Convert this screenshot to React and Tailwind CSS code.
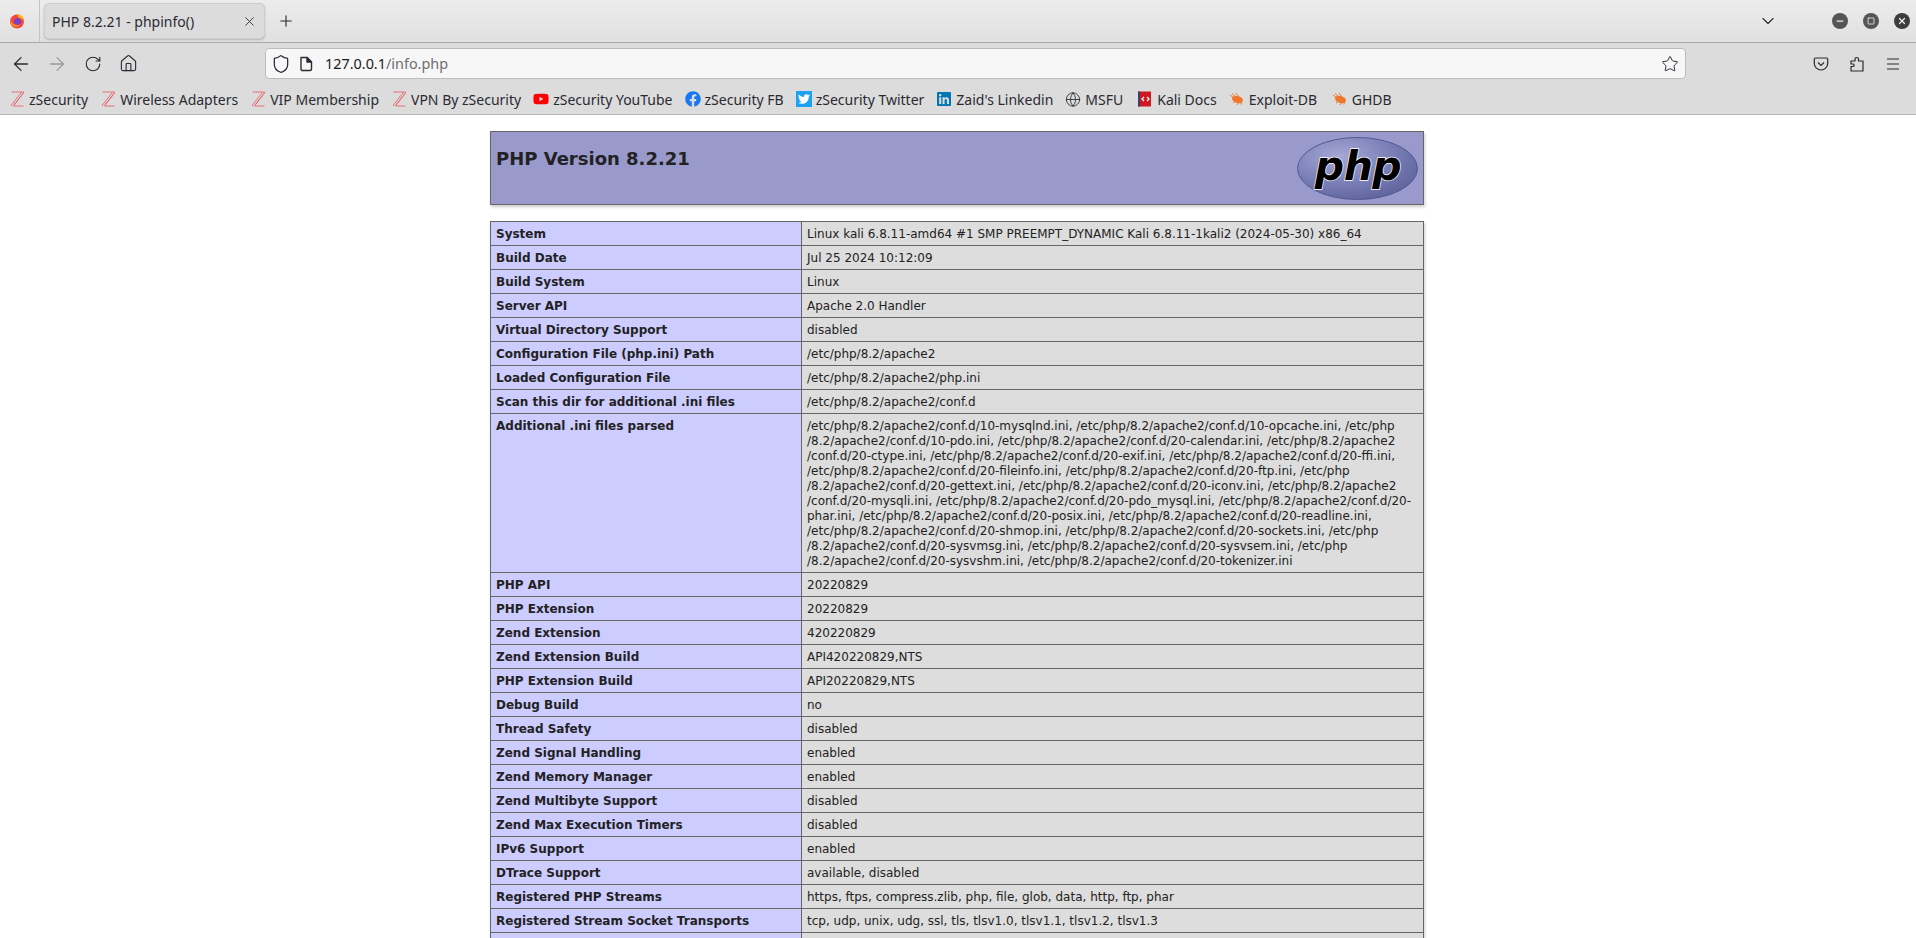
import React from 'react';
import { FaFacebook, FaTwitter, FaLinkedin, FaYoutube } from 'react-icons/fa';
import { ArrowLeft, ArrowRight, RotateCw, Home, Shield, Star, ChevronDown, Plus, X, Globe, Minus, Square } from 'lucide-react';

const ZIcon = () => (
  <svg width="13" height="16" viewBox="0 0 13 16" fill="none" stroke="#e8636b" strokeWidth="0.9">
    <path d="M0.5 1H12.5V2L2.5 15H12.5M0.5 15V14L10.5 1.2M3 13.8L12 2.5" />
  </svg>
);

const FirefoxIcon = () => (
  <svg width="16" height="16" viewBox="0 0 16 16">
    <circle cx="8" cy="8.5" r="7" fill="#f4473f" />
    <circle cx="8.5" cy="8.5" r="3.6" fill="#7b3fbf" />
    <path d="M8 1C12 1 15.5 4 15 9C14.5 6 12 5 10 5Z" fill="#ffb21e" />
    <path d="M1.5 7C3 11 7 13 11 11.5C9 14.5 3.5 15 1.5 10Z" fill="#ff8a1f" />
  </svg>
);

const PocketIcon = () => (
  <svg width="16" height="16" viewBox="0 0 16 16" fill="none" stroke="#2b2a33" strokeWidth="1.2">
    <path d="M2.5 2H13.5C14.2 2 14.7 2.5 14.7 3.2V7.5C14.7 11 11.5 14 8 14C4.5 14 1.3 11 1.3 7.5V3.2C1.3 2.5 1.8 2 2.5 2Z" />
    <path d="M5 6.5L8 9.5L11 6.5" />
  </svg>
);

const PuzzleIcon = () => (
  <svg width="16" height="16" viewBox="0 0 16 16" fill="none" stroke="#2b2a33" strokeWidth="1.2" strokeLinejoin="round">
    <path d="M2 15V10.5H4.2C5.4 10.5 5.4 8 4.2 8H2V5H6V3C6 1 9.5 1 9.5 3V5H14V15Z" />
  </svg>
);

const FileIcon = () => (
  <svg width="14" height="16" viewBox="0 0 14 16" fill="none" stroke="#2b2a33" strokeWidth="1.4" strokeLinejoin="round">
    <path d="M2 1.5H8L12.5 6V13C12.5 13.9 11.9 14.5 11 14.5H3C2.4 14.5 2 13.9 2 13Z" />
    <path d="M8 1.5V6H12.5Z" fill="#2b2a33" />
  </svg>
);

const MenuIcon = () => (
  <svg width="16" height="16" viewBox="0 0 16 16" stroke="#2b2a33" strokeWidth="1.2">
    <path d="M2 3H14M2 8H14M2 13H14" />
  </svg>
);

const KaliDocsIcon = () => (
  <svg width="14" height="16" viewBox="0 0 14 16">
    <rect x="0" y="0.5" width="13" height="15" fill="#d01820" />
    <rect x="0" y="0.5" width="2" height="15" fill="#3a3f78" />
    <path d="M6 6L4 8L6 10M9 6L11 8L9 10" fill="none" stroke="#fff" strokeWidth="1.2" />
  </svg>
);

const BugIcon = () => (
  <svg width="16" height="14" viewBox="0 0 16 14" fill="none" stroke="#f0762d" strokeWidth="1">
    <ellipse cx="8.5" cy="7.5" rx="5" ry="2.8" fill="#f0762d" transform="rotate(18 8.5 7.5)" />
    <path d="M1 3L5 6M3 1.5L7 5M7 1L10 5M4 11L7 9M8 13L10 10M12 12.5L12.5 9.5" />
  </svg>
);

const PhpLogo = () => (
  <svg width="123" height="65" viewBox="0 0 123 65">
    <defs>
      <radialGradient id="phpFill" cx="0.35" cy="0.3" r="0.8">
        <stop offset="0" stopColor="#a5a8d4" />
        <stop offset="0.6" stopColor="#777bb4" />
        <stop offset="1" stopColor="#5c6099" />
      </radialGradient>
    </defs>
    <ellipse cx="61.5" cy="32.5" rx="60" ry="31" fill="url(#phpFill)" stroke="#4f5b93" strokeWidth="1" />
    <text x="62" y="44" textAnchor="middle" fontFamily="'DejaVu Sans', sans-serif" fontSize="41" fontWeight="700" fontStyle="italic" fill="#000" stroke="#fff" strokeWidth="1.4" paintOrder="stroke" letterSpacing="-0.5">php</text>
  </svg>
);

const bookmarks = [
  { label: 'zSecurity', icon: <ZIcon /> },
  { label: 'Wireless Adapters', icon: <ZIcon /> },
  { label: 'VIP Membership', icon: <ZIcon /> },
  { label: 'VPN By zSecurity', icon: <ZIcon /> },
  { label: 'zSecurity YouTube', icon: <FaYoutube size={16} color="#f00" /> },
  { label: 'zSecurity FB', icon: <FaFacebook size={16} color="#1877f2" /> },
  { label: 'zSecurity Twitter', icon: <FaTwitter size={16} className="bg-[#1da1f2] text-white p-[2px]" /> },
  { label: "Zaid's Linkedin", icon: <FaLinkedin size={16} color="#0077b5" /> },
  { label: 'MSFU', icon: <Globe size={17} strokeWidth={1.3} color="#2b2a33" /> },
  { label: 'Kali Docs', icon: <KaliDocsIcon />, cls: 'ml-[2px]' },
  { label: 'Exploit-DB', icon: <BugIcon />, labelCls: 'min-w-[71px]' },
  { label: 'GHDB', icon: <BugIcon /> },
];

// hard line breaks: the reference wraps these before slashes
const iniLines = [
  '/etc/php/8.2/apache2/conf.d/10-mysqlnd.ini, /etc/php/8.2/apache2/conf.d/10-opcache.ini, /etc/php',
  '/8.2/apache2/conf.d/10-pdo.ini, /etc/php/8.2/apache2/conf.d/20-calendar.ini, /etc/php/8.2/apache2',
  '/conf.d/20-ctype.ini, /etc/php/8.2/apache2/conf.d/20-exif.ini, /etc/php/8.2/apache2/conf.d/20-ffi.ini,',
  '/etc/php/8.2/apache2/conf.d/20-fileinfo.ini, /etc/php/8.2/apache2/conf.d/20-ftp.ini, /etc/php',
  '/8.2/apache2/conf.d/20-gettext.ini, /etc/php/8.2/apache2/conf.d/20-iconv.ini, /etc/php/8.2/apache2',
  '/conf.d/20-mysqli.ini, /etc/php/8.2/apache2/conf.d/20-pdo_mysql.ini, /etc/php/8.2/apache2/conf.d/20-',
  'phar.ini, /etc/php/8.2/apache2/conf.d/20-posix.ini, /etc/php/8.2/apache2/conf.d/20-readline.ini,',
  '/etc/php/8.2/apache2/conf.d/20-shmop.ini, /etc/php/8.2/apache2/conf.d/20-sockets.ini, /etc/php',
  '/8.2/apache2/conf.d/20-sysvmsg.ini, /etc/php/8.2/apache2/conf.d/20-sysvsem.ini, /etc/php',
  '/8.2/apache2/conf.d/20-sysvshm.ini, /etc/php/8.2/apache2/conf.d/20-tokenizer.ini',
];

const rows = [
  ['System', 'Linux kali 6.8.11-amd64 #1 SMP PREEMPT_DYNAMIC Kali 6.8.11-1kali2 (2024-05-30) x86_64'],
  ['Build Date', 'Jul 25 2024 10:12:09'],
  ['Build System', 'Linux'],
  ['Server API', 'Apache 2.0 Handler'],
  ['Virtual Directory Support', 'disabled'],
  ['Configuration File (php.ini) Path', '/etc/php/8.2/apache2'],
  ['Loaded Configuration File', '/etc/php/8.2/apache2/php.ini'],
  ['Scan this dir for additional .ini files', '/etc/php/8.2/apache2/conf.d'],
  ['Additional .ini files parsed', iniLines],
  ['PHP API', '20220829'],
  ['PHP Extension', '20220829'],
  ['Zend Extension', '420220829'],
  ['Zend Extension Build', 'API420220829,NTS'],
  ['PHP Extension Build', 'API20220829,NTS'],
  ['Debug Build', 'no'],
  ['Thread Safety', 'disabled'],
  ['Zend Signal Handling', 'enabled'],
  ['Zend Memory Manager', 'enabled'],
  ['Zend Multibyte Support', 'disabled'],
  ['Zend Max Execution Timers', 'disabled'],
  ['IPv6 Support', 'enabled'],
  ['DTrace Support', 'available, disabled'],
  ['Registered PHP Streams', 'https, ftps, compress.zlib, php, file, glob, data, http, ftp, phar'],
  ['Registered Stream Socket Transports', 'tcp, udp, unix, udg, ssl, tls, tlsv1.0, tlsv1.1, tlsv1.2, tlsv1.3'],
];

const App = () => {
  return (
    <div className="h-[938px] overflow-hidden bg-white flex flex-col font-['Noto_Sans',sans-serif]">
      {/* tab strip */}
      <div className="h-[43px] shrink-0 flex items-center bg-gradient-to-b from-[#ececec] to-[#e0e0e0] border-b border-[#a8a8a8]">
        <div className="w-10 h-full flex items-center pl-[9px] border-r border-[#c4c4c4] shrink-0">
          <FirefoxIcon />
        </div>
        <div className="ml-1 w-[221px] h-9 bg-[#dcdcdc] rounded-[5px] border border-[#cdcdcd] shadow-[0_1px_2px_rgba(0,0,0,0.2)] flex items-center pl-[7px] pr-[7px] justify-between">
          <span className="text-[14px] text-[#2b2a33]">PHP 8.2.21 - phpinfo()</span>
          <X size={15} strokeWidth={1.4} color="#2b2a33" />
        </div>
        <Plus size={18} strokeWidth={1.5} color="#2b2a33" className="ml-[12px]" />
        <div className="flex-1" />
        <ChevronDown size={20} strokeWidth={1.3} color="#2b2a33" className="mr-[54px]" />
        <div className="flex items-center gap-[15px] mr-[6px]">
          <span className="w-4 h-4 rounded-full bg-[#555] flex items-center justify-center"><Minus size={10} strokeWidth={3} color="#eee" /></span>
          <span className="w-4 h-4 rounded-full bg-[#555] flex items-center justify-center"><Square size={8} strokeWidth={2.5} color="#eee" /></span>
          <span className="w-4 h-4 rounded-full bg-[#3d3d3d] flex items-center justify-center"><X size={10} strokeWidth={3} color="#eee" /></span>
        </div>
      </div>

      {/* nav bar */}
      <div className="h-[41px] shrink-0 bg-[#dcdcdc] flex items-center">
        <ArrowLeft size={22} strokeWidth={1.4} color="#2b2a33" className="ml-[10px]" />
        <ArrowRight size={22} strokeWidth={1.4} color="#9a9a9f" className="ml-[14px]" />
        <RotateCw size={18} strokeWidth={1.5} color="#2b2a33" className="ml-4" />
        <Home size={19} strokeWidth={1.4} color="#2b2a33" className="ml-[17px]" />
        <div className="ml-[127px] w-[1421px] h-[31px] shrink-0 bg-[#f7f7f7] rounded-[4px] border border-[#bcbcbc] flex items-center">
          <Shield size={20} strokeWidth={1.5} color="#2b2a33" className="ml-[5px]" />
          <span className="ml-2 flex"><FileIcon /></span>
          <span className="ml-3 text-[14.4px] text-[#1c1b22]">127.0.0.1<span className="text-[#6d6d72]">/info.php</span></span>
          <Star size={18} strokeWidth={1.3} color="#2b2a33" className="ml-auto mr-[6px]" />
        </div>
        <div className="ml-[127px] flex items-center gap-5">
          <PocketIcon />
          <PuzzleIcon />
          <MenuIcon />
        </div>
      </div>

      {/* bookmarks */}
      <div className="h-[31px] shrink-0 bg-[#dcdcdc] border-b border-[#b5b5b5] flex items-center pl-[9px] gap-3">
        {bookmarks.map((b) => (
          <div key={b.label} className={`flex items-center gap-1 ${b.cls || ''}`}>
            <span className="w-4 h-4 flex items-center justify-center shrink-0">{b.icon}</span>
            <span className={`text-[14px] text-[#2b2a33] whitespace-nowrap ${b.labelCls || ''}`}>{b.label}</span>
          </div>
        ))}
      </div>

      {/* page */}
      <div className="flex-1 min-h-0 overflow-hidden bg-white text-[#222] font-['DejaVu_Sans',sans-serif] text-[12px] leading-[15px]">
        <div className="w-[934px] ml-[490px] mt-4">
          <div className="h-[74px] bg-[#9999cc] border border-[#666] shadow-[1px_2px_3px_#ccc] flex justify-between pl-[5px] pr-[4px] pt-[4px]">
            <h1 className="text-[18px] leading-[26px] font-bold mt-[10px]">PHP Version 8.2.21</h1>
            <PhpLogo />
          </div>
          <div className="mt-4 border-t border-l border-[#666] shadow-[1px_2px_3px_#ccc] flex flex-col">
            {rows.map(([k, v]) => (
              <div key={k} className="flex">
                <div className="w-[311px] shrink-0 bg-[#ccccff] font-bold border-r border-b border-[#666] px-[5px] pt-[5px] pb-[3px]">{k}</div>
                <div className="flex-1 bg-[#dddddd] border-r border-b border-[#666] px-[5px] pt-[5px] pb-[3px]">
                  {Array.isArray(v)
                    ? v.map((line) => <span key={line} className="block whitespace-nowrap">{line}</span>)
                    : v}
                </div>
              </div>
            ))}
            {/* next row is only just showing at the fold */}
            <div className="flex h-6">
              <div className="w-[311px] shrink-0 bg-[#ccccff] border-r border-[#666]" />
              <div className="flex-1 bg-[#dddddd] border-r border-[#666]" />
            </div>
          </div>
        </div>
      </div>
    </div>
  );
};

export default App;
